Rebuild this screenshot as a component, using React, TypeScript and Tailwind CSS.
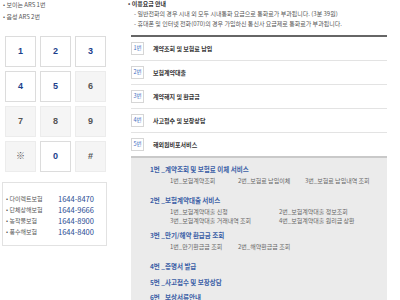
import React from 'react';

const font = { fontFamily: '"Noto Sans CJK KR", "Liberation Sans", sans-serif' };

const keys = [
  { k: '1', on: true },
  { k: '2', on: true },
  { k: '3', on: true },
  { k: '4', on: true },
  { k: '5', on: true },
  { k: '6', on: false },
  { k: '7', on: false },
  { k: '8', on: false },
  { k: '9', on: false },
  { k: '※', on: false },
  { k: '0', on: true },
  { k: '#', on: false },
];

const phones = [
  ['다이렉트보험', '1644-8470'],
  ['단체상해보험', '1644-9666'],
  ['농작물보험', '1644-8900'],
  ['풍수해보험', '1644-8400'],
];

const menus = ['계약조회 및 보험료 납입', '보험계약대출', '계약해지 및 환급금', '사고접수 및 보장상담', '해외원비포서비스'];

const groups = [
  { title: '1번 _계약조회 및 보험료 이체 서비스', mt: 'mt-0', cols: 'grid-cols-[68px_67px_auto]', subs: ['1번_보험계약조회', '2번_보험료 납입이체', '3번_보험료 납입내역 조회'] },
  { title: '2번 _보험계약대출 서비스', mt: 'mt-[10px]', cols: 'grid-cols-[109px_auto]', subs: ['1번_보험계약대출 신청', '2번_보험계약대출 정보조회', '3번_보험계약대출 거래내역 조회', '4번_보험계약대출 원리금 상환'] },
  { title: '3번 _만기/해약 환급금 조회', mt: 'mt-[5px]', cols: 'grid-cols-[68px_auto]', subs: ['1번_만기환급금 조회', '2번_해약환급금 조회'] },
  { title: '4번 _증명서 발급', mt: 'mt-[10px]', cols: '', subs: [] },
  { title: '5번 _사고접수 및 보장상담', mt: 'mt-[6px]', cols: '', subs: [] },
  { title: '6번 _보상서류안내', mt: 'mt-[5px]', cols: '', subs: [] },
];

export default function App() {
  return (
    <div className="w-[400px] h-[300px] overflow-hidden bg-white flex text-[#555]" style={font}>
      {/* left: ARS keypad */}
      <div className="w-[125px] shrink-0">
        <div className="pl-[3px] mt-[-1px] text-[6px]">
          <div className="h-[12px] leading-[12px]">• 보이는 ARS 1번</div>
          <div className="h-[12px] leading-[12px]">• 음성 ARS 2번</div>
        </div>
        <div className="mt-[13px] ml-[5px] grid grid-cols-[31px_31px_31px] auto-rows-[31px] gap-[4px]">
          {keys.map((b) => (
            <div
              key={b.k}
              className={
                b.on
                  ? 'border border-[#dcdcdc] bg-white text-[#1c3f8c] flex items-center justify-center text-[9px] font-bold'
                  : 'border border-[#ececec] bg-[#f5f5f5] text-[#555] flex items-center justify-center text-[9px] font-bold'
              }
              style={{ fontFamily: '"Liberation Sans", "Noto Sans CJK KR", sans-serif' }}
            >
              {b.k}
            </div>
          ))}
        </div>
        <div className="mt-[10px] ml-[2px] w-[105px] h-[64px] border border-[#e2e2e2] pt-[10px] pl-[3px]">
          {phones.map(([n, t]) => (
            <div key={n} className="flex items-center h-[11px]">
              <span className="w-[52px] text-[6px]">• {n}</span>
              <span className="text-[7.5px] text-[#2b4c94]">{t}</span>
            </div>
          ))}
        </div>
      </div>

      {/* right: menu */}
      <div className="w-[259px] ml-[3px]">
        <div className="mt-[-1px] text-[6px]">
          <div className="h-[10px] leading-[10px] font-bold text-[#333]">• 이용요금 안내</div>
          <div className="pl-[6px] h-[10px] leading-[10px]">- 일반전화의 경우 시내 외 모두 시내통화 요금으로 통화료가 부과됩니다. (3분 39원)</div>
          <div className="pl-[6px] h-[10px] leading-[10px]">- 휴대폰 및 인터넷 전화(070)의 경우 가입하신 통신사 요금제로 통화료가 부과됩니다.</div>
        </div>
        <div className="ml-[3px] mt-[6px] border-t-2 border-[#666]">
          {menus.map((m, i) => (
            <div key={m} className={i < 4 ? 'h-[24px] border-b border-[#e3e3e3] flex items-center' : 'h-[23px] flex items-center'}>
              <span className="w-[13px] h-[13px] border border-[#d6d6d6] flex items-center justify-center text-[5.5px] text-[#3c6cc0]">{i + 1}번</span>
              <span className="ml-[9px] text-[6px] font-bold text-[#333]">{m}</span>
            </div>
          ))}
          <div className="h-[160px] bg-[#ebebeb] border-t-2 border-[#c9c9c9] pl-[19px] pt-[6px]">
            {groups.map((g) => (
              <div key={g.title} className={g.mt}>
                <div className="h-[10px] leading-[10px] text-[6.5px] font-bold text-[#3a5ea6]">{g.title}</div>
                {g.subs.length > 0 && (
                  <div className={'mt-[2px] pl-[20px] grid text-[6px] text-[#666] ' + g.cols}>
                    {g.subs.map((s) => (
                      <span key={s} className="h-[9px] leading-[9px] whitespace-nowrap">{s}</span>
                    ))}
                  </div>
                )}
              </div>
            ))}
          </div>
        </div>
      </div>
    </div>
  );
}
